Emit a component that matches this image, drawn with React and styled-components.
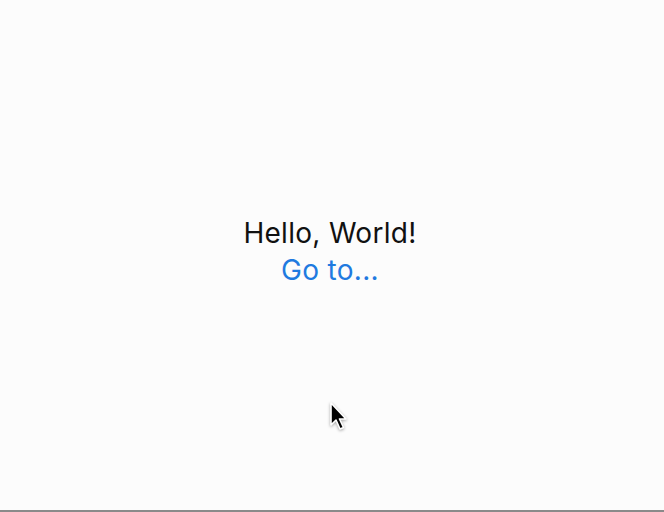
import React from "react";
import styled, { createGlobalStyle } from "styled-components";

const Global = createGlobalStyle`
  html, body {
    margin: 0;
    padding: 0;
    background: #fcfcfc;
  }
`;

const Screen = styled.div`
  position: relative;
  width: 664px;
  height: 512px;
  box-sizing: border-box;
  border-bottom: 2px solid #8a8a8a;
  display: flex;
  flex-direction: column;
  align-items: center;
  justify-content: center;
  font-family: Inter, "Liberation Sans", sans-serif;
`;

const Content = styled.div`
  display: flex;
  flex-direction: column;
  align-items: center;
  margin-top: -6px;
  padding-right: 4px;
`;

const Title = styled.div`
  font-size: 28px;
  line-height: 37px;
  letter-spacing: 0.3px;
  color: #111;
`;

const Link = styled.a`
  font-size: 28px;
  line-height: 37px;
  letter-spacing: 0.3px;
  color: #1f7ae0;
  text-decoration: none;
  cursor: pointer;
`;

const Cursor = styled.svg`
  position: absolute;
  left: 329px;
  top: 401px;
  filter: drop-shadow(0 1px 1.5px rgba(0, 0, 0, 0.35));
`;

export default function App() {
  return (
    <>
      <Global />
      <Screen>
        <Content>
          <Title>Hello, World!</Title>
          <Link>Go to...</Link>
        </Content>
        <Cursor width="22" height="32" viewBox="0 0 22 32">
          <path
            d="M2 2 L2 24 L7 19 L11 28 L14.5 26.5 L10.5 18 L17 18 Z"
            fill="#000"
            stroke="#fff"
            strokeWidth="1.6"
            strokeLinejoin="round"
          />
        </Cursor>
      </Screen>
    </>
  );
}
